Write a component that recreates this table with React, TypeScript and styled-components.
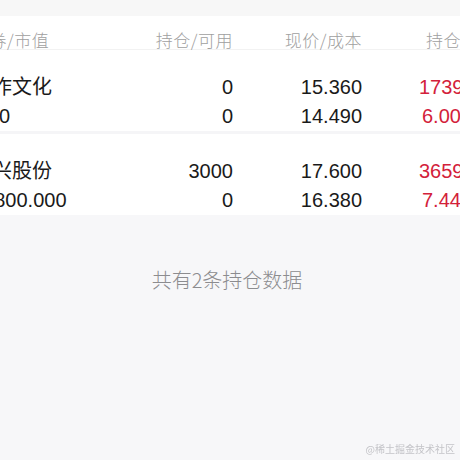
import React from "react";
import styled, { createGlobalStyle } from "styled-components";

const Global = createGlobalStyle`
  html, body { margin: 0; padding: 0; }
  body {
    width: 460px;
    height: 460px;
    overflow: hidden;
    background: #f7f7f9;
    font-family: "Liberation Sans", "Noto Sans CJK SC", sans-serif;
    -webkit-font-smoothing: antialiased;
  }
`;

const Page = styled.div`
  width: 460px;
  height: 460px;
  overflow: hidden;
  display: flex;
  flex-direction: column;
`;

const TopStrip = styled.div`
  height: 16px;
  background: #f7f7f7;
  flex-shrink: 0;
`;

const Table = styled.div`
  width: 560px;
  margin-left: -28px;
  display: flex;
  flex-direction: column;
`;

const Grid = styled.div`
  display: grid;
  grid-template-columns: 150px 111px 129px 1fr;
  align-items: center;
`;

const HeaderRow = styled(Grid)`
  background: #fff;
  height: 34px;
  box-sizing: border-box;
  padding-top: 12px;
  border-bottom: 1px solid #f2f2f2;
  align-items: start;
`;

const HeadCell = styled.div<{ $align?: "left" | "right"; $pad?: number }>`
  font-family: "Noto Sans CJK SC", sans-serif;
  font-weight: 300;
  font-size: 17px;
  line-height: 24px;
  letter-spacing: 0.5px;
  color: #a0a0a0;
  white-space: nowrap;
  text-align: ${(p) => p.$align ?? "left"};
  padding-left: ${(p) => p.$pad ?? 0}px;
`;

const Rows = styled.div`
  display: flex;
  flex-direction: column;
  gap: 3px;
  background: #f5f5f7;
`;

const DataRow = styled(Grid)`
  background: #fff;
  padding: 23px 0 0;
  grid-auto-rows: 29px;
`;

const Cell = styled.div<{ $align?: "left" | "right"; $red?: boolean; $pad?: number }>`
  font-size: 20px;
  line-height: 29px;
  white-space: nowrap;
  color: ${(p) => (p.$red ? "#d3213a" : "#1a1a1a")};
  text-align: ${(p) => p.$align ?? "left"};
  padding-left: ${(p) => p.$pad ?? 0}px;
`;

const Summary = styled.div`
  padding-top: 52px;
  text-align: center;
  font-family: "Noto Sans CJK SC", sans-serif;
  font-weight: 300;
  font-size: 20px;
  line-height: 26px;
  color: #8c8c8f;
  margin-left: -6px;
`;

const Watermark = styled.div`
  position: fixed;
  right: 5px;
  bottom: 4px;
  font-family: "Noto Sans CJK SC", sans-serif;
  font-size: 10px;
  line-height: 14px;
  color: #c4c4c8;
`;

type Holding = {
  name: string;
  value: string;
  valuePad?: number;
  hold: string;
  avail: string;
  price: string;
  cost: string;
  pnl: string;
  pnlPct: string;
};

const holdings: Holding[] = [
  {
    name: "中作文化",
    value: "0",
    valuePad: 27,
    hold: "0",
    avail: "0",
    price: "15.360",
    cost: "14.490",
    pnl: "1739.00",
    pnlPct: "6.00%",
  },
  {
    name: "嘉兴股份",
    value: "52800.000",
    hold: "3000",
    avail: "0",
    price: "17.600",
    cost: "16.380",
    pnl: "3659.99",
    pnlPct: "7.44%",
  },
];

export default function App() {
  return (
    <Page>
      <Global />
      <TopStrip />
      <Table>
        <HeaderRow>
          <HeadCell>证券/市值</HeadCell>
          <HeadCell $align="right">持仓/可用</HeadCell>
          <HeadCell $align="right">现价/成本</HeadCell>
          <HeadCell $pad={64}>持仓盈亏</HeadCell>
        </HeaderRow>
        <Rows>
          {holdings.map((h) => (
            <DataRow key={h.name}>
              <Cell>{h.name}</Cell>
              <Cell $align="right">{h.hold}</Cell>
              <Cell $align="right">{h.price}</Cell>
              <Cell $red $pad={57}>{h.pnl}</Cell>
              <Cell $pad={h.valuePad}>{h.value}</Cell>
              <Cell $align="right">{h.avail}</Cell>
              <Cell $align="right">{h.cost}</Cell>
              <Cell $red $pad={60}>{h.pnlPct}</Cell>
            </DataRow>
          ))}
        </Rows>
      </Table>
      <Summary>共有2条持仓数据</Summary>
      <Watermark>@稀土掘金技术社区</Watermark>
    </Page>
  );
}
